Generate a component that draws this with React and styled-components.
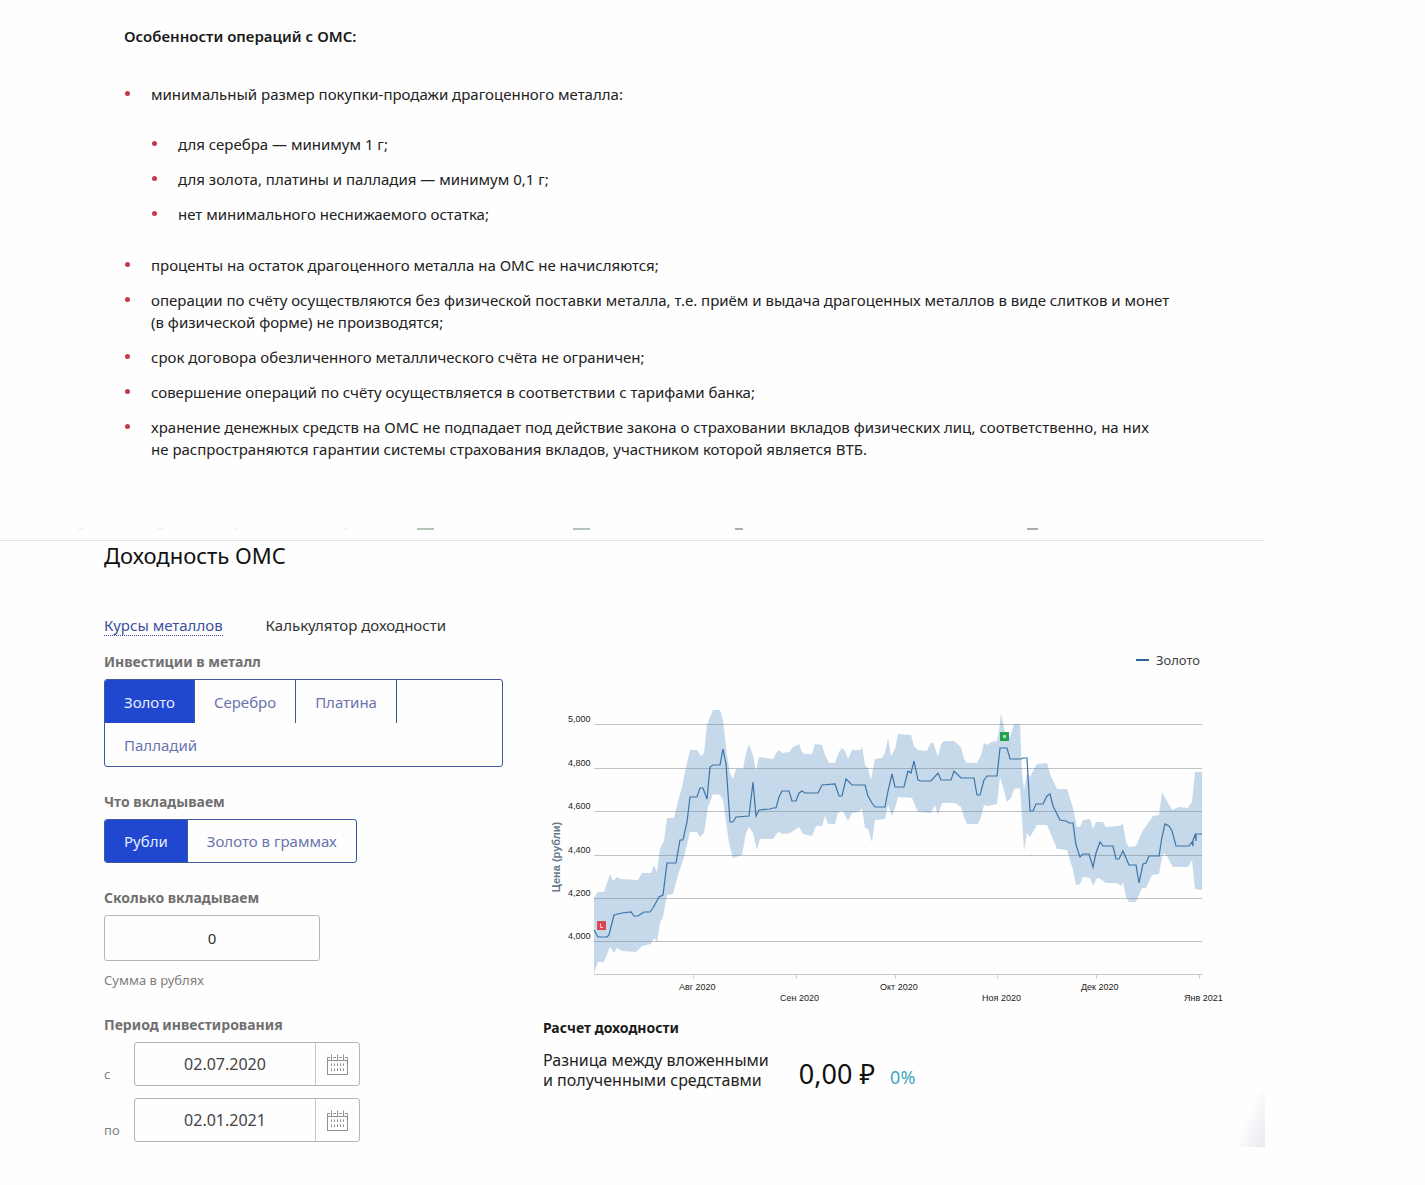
import React, { useState } from "react";
import styled, { createGlobalStyle, css } from "styled-components";

const GlobalStyle = createGlobalStyle`
  *, *::before, *::after { box-sizing: border-box; }
  body {
    margin: 0;
    background: #fefefe;
    color: #222;
    font-family: "Noto Sans", "Open Sans", sans-serif;
    font-size: 15px;
    line-height: 22px;
  }
  button, input { font: inherit; color: inherit; }
`;

const Page = styled.main`
  position: relative;
  max-width: 1265px;
`;

const Features = styled.section`
  padding: 25px 60px 68px 124px;
`;

const FeaturesTitle = styled.h2`
  margin: 0 0 36px;
  font-size: 15px;
  line-height: 22px;
  font-weight: 600;
  color: #1a1a1a;
`;

const BulletList = styled.ul`
  display: grid;
  gap: 13px;
  margin: ${(p) => (p.$nested ? "28px 0 16px" : "0")};
  padding: 0;
  list-style: none;
`;

const BulletItem = styled.li`
  display: grid;
  grid-template-columns: 27px minmax(0, 1045px);

  &::before {
    content: "";
    width: 5px;
    height: 5px;
    margin: 8px 0 0 1px;
    border-radius: 50%;
    background: #c43a4b;
  }
`;

const Remnants = styled.svg`
  display: block;
  width: 100%;
  height: 2px;
`;

const Yield = styled.section`
  margin-top: 10px;
  border-top: 1px solid #e2e2e2;
  padding: 0 25px 5px 104px;
`;

const YieldTitle = styled.h1`
  margin: 0 0 46px;
  font-size: 22px;
  line-height: 28px;
  font-weight: 400;
  color: #111;
`;

const Tabs = styled.nav`
  display: flex;
  gap: 43px;
  margin-bottom: 4px;
`;

const Tab = styled.a`
  line-height: 20px;
  text-decoration: none;
  color: ${(p) => (p.$link ? "#3c4f9f" : "#333")};
  border-bottom: 1px dotted ${(p) => (p.$link ? "#3c4f9f" : "transparent")};
`;

const Columns = styled.div`
  display: grid;
  grid-template-columns: 399px minmax(0, 1fr);
  gap: 37px;
`;

const Form = styled.form`
  display: flex;
  flex-direction: column;
  gap: 25px;
  padding-top: 12px;
`;

const Field = styled.fieldset`
  display: flex;
  flex-direction: column;
  align-items: flex-start;
  margin: 0;
  padding: 0;
  border: 0;
  min-width: 0;
`;

const labelStyle = css`
  display: block;
  margin: 0 0 7px;
  padding: 0;
  font-size: 14px;
  line-height: 20px;
  font-weight: 700;
  color: #707070;
`;

const Legend = styled.legend`${labelStyle}`;
const FieldLabel = styled.label`${labelStyle}`;

const Segments = styled.div`
  display: flex;
  flex-wrap: wrap;
  border: 1px solid #3f5a9c;
  border-radius: 3px;
  overflow: hidden;
`;

const Segment = styled.button`
  height: ${(p) => (p.$tall ? 43 : 42)}px;
  padding: 0 19px;
  border: 0;
  border-right: ${(p) => (p.$last ? "0" : "1px solid #3f5a9c")};
  background: ${(p) => (p.$active ? "#1f47d0" : "transparent")};
  color: ${(p) => (p.$active ? "#e6edff" : "#6b74ad")};
`;

const AmountInput = styled.input`
  width: 216px;
  height: 46px;
  border: 1px solid #b4b4b4;
  border-radius: 3px;
  background: #fefefe;
  text-align: center;
  color: #333;
`;

const Hint = styled.small`
  margin-top: 9px;
  font-size: 13px;
  line-height: 20px;
  color: #808080;
`;

const DateRows = styled.div`
  display: grid;
  gap: 12px;
`;

const DateRow = styled.div`
  display: grid;
  grid-template-columns: 30px 226px;
  align-items: end;
`;

const DateLabel = styled.label`
  font-size: 13px;
  line-height: 20px;
  padding-bottom: 2px;
  color: #808080;
`;

const DateBox = styled.div`
  display: flex;
  height: 44px;
  border: 1px solid #b4b4b4;
  border-radius: 3px;
`;

const DateInput = styled.input`
  flex: 1;
  min-width: 0;
  padding: 0;
  border: 0;
  background: transparent;
  text-align: center;
  font-size: 16px;
  color: #444;
`;

const CalendarButton = styled.button`
  display: grid;
  place-items: center;
  width: 44px;
  padding: 0;
  border: 0;
  border-left: 1px solid #c8c8c8;
  background: transparent;
`;

const ChartSvg = styled.svg`
  display: block;
  width: 100%;
  max-width: 700px;
  font-family: "Liberation Sans", sans-serif;
  font-size: 9px;
  fill: #222;
`;

const Result = styled.section`
  padding: 7px 0 0 3px;
`;

const ResultTitle = styled.h3`
  margin: 0 0 11px;
  font-size: 14px;
  line-height: 22px;
  font-weight: 700;
  color: #1a1a1a;
`;

const ResultRow = styled.div`
  display: flex;
  align-items: end;
  gap: 30px;
`;

const ResultText = styled.p`
  margin: 0;
  font-size: 16px;
  line-height: 20px;
`;

const Amounts = styled.div`
  display: flex;
  align-items: baseline;
  gap: 15px;
`;

const Total = styled.output`
  font-size: 27px;
  line-height: 32px;
  color: #111;
`;

const Percent = styled.span`
  font-size: 18px;
  color: #3fa6bd;
`;

const CornerShade = styled.div`
  position: absolute;
  right: 0;
  bottom: 0;
  width: 26px;
  height: 56px;
  background: linear-gradient(to top left, #e9eaf0, rgba(254, 254, 254, 0) 65%);
`;

const upper =
  "54,258 58,252 64,252 67,243 70,234 73,241 77,237 80,239 98,240 102,233 111,233 114,225 117,232 120,208 124,201 127,178 134,178 137,165 142,147 145,132 150,110 157,110 161,116 164,113 167,85 169,80 173,70 180,70 183,80 187,115 190,133 193,139 196,129 203,129 206,113 209,104 213,115 216,131 219,117 233,119 236,113 239,110 242,113 249,112 253,107 259,104 262,112 265,114 272,114 275,104 282,105 285,115 289,123 295,123 299,112 302,108 305,111 308,119 312,110 321,110 322,106 325,125 328,128 331,140 335,119 342,118 345,113 348,98 351,116 355,109 358,94 371,95 374,106 378,110 387,111 390,104 393,102 398,117 401,104 404,101 414,101 421,107 424,119 427,123 437,123 441,115 444,103 447,105 451,102 457,101 459,90 461,74 465,92 470,97 474,84 480,84 482,133 484,150 487,133 490,137 493,131 497,124 507,123 510,134 517,149 527,149 533,168 537,187 540,187 543,180 550,179 553,189 556,182 563,182 566,187 579,186 583,184 586,202 589,207 596,206 602,192 609,182 613,176 619,175 622,152 626,159 632,170 639,167 648,168 652,162 655,132 662,132";

const lower =
  "662,250 655,249 652,220 648,227 633,227 630,222 627,216 624,213 622,217 619,234 612,235 606,248 602,248 596,262 589,262 586,257 583,242 581,246 577,243 566,243 559,238 557,238 553,246 550,238 543,237 540,244 536,245 533,230 527,210 517,209 507,185 497,185 490,197 487,193 484,211 482,177 480,148 474,149 471,158 467,162 463,147 460,137 457,164 448,166 444,165 441,177 438,184 427,184 424,177 421,167 415,163 402,163 398,175 395,165 391,173 378,172 372,158 358,157 355,168 352,176 348,165 345,179 335,180 332,202 328,189 325,188 322,168 319,172 312,173 308,181 303,171 298,173 295,184 288,184 285,176 282,186 276,186 272,196 263,194 259,187 250,193 243,194 238,192 233,199 220,199 217,210 213,193 209,187 206,193 202,215 193,218 189,203 183,160 180,155 173,154 168,167 164,193 160,197 157,192 150,192 144,217 138,235 133,254 127,255 123,277 120,283 117,302 114,298 111,304 102,306 96,312 82,311 77,308 74,313 70,307 64,322 58,322 54,333";

const price =
  "54,290 58,297 67,297 69,295 74,275 82,273 91,272 94,276 98,276 104,272 110,272 113,268 119,257 123,255 127,223 136,223 140,200 143,200 147,182 150,157 157,157 160,148 163,148 167,159 170,127 173,125 180,125 183,109 186,124 190,182 193,182 196,177 209,176 213,142 216,176 219,170 230,169 233,168 236,168 239,157 242,151 249,151 252,161 256,161 259,153 262,151 265,153 278,153 282,145 295,144 299,156 302,156 306,139 312,145 325,145 328,156 332,163 335,167 345,167 348,151 352,134 355,147 364,147 368,131 371,133 374,121 378,140 381,141 391,141 398,133 401,140 411,140 414,131 421,138 434,138 437,155 440,155 444,140 447,136 457,136 460,108 467,108 470,119 481,119 483,118 487,118 490,171 493,171 496,164 503,164 507,156 510,154 513,166 520,180 526,181 529,183 533,183 536,205 540,217 543,214 549,214 553,227 556,213 560,202 563,206 573,206 576,219 579,219 583,211 589,225 596,225 599,243 603,224 606,223 609,216 619,216 622,197 625,184 629,186 632,191 636,206 649,206 652,202 653,206 653,200 655,195 656,201 656,194 662,194";

const priceTicks = [
  ["5,000", 84], ["4,800", 128], ["4,600", 171],
  ["4,400", 215], ["4,200", 258], ["4,000", 301],
];

const monthTicks = [
  ["Авг 2020", 153, 139, 350], ["Сен 2020", 256, 240, 361],
  ["Окт 2020", 355, 340, 350], ["Ноя 2020", 457, 442, 361],
  ["Дек 2020", 556, 541, 350], ["Янв 2021", 659, 644, 361],
];

function PriceChart() {
  return (
    <ChartSvg viewBox="0 0 700 370" role="img" aria-label="Цена золота в рублях">
      <path d="M596 20H609" stroke="#2f6596" strokeWidth="2" />
      <text x="616" y="25" fontFamily="Noto Sans, sans-serif" fontSize="13" fill="#444">Золото</text>
      <polygon points={`${upper} ${lower}`} fill="#c5d9ea" />
      {priceTicks.map(([label, y]) => (
        <g key={label}>
          <path d={`M54 ${y + 0.5}H662`} stroke="#6f7b85" strokeOpacity="0.45" />
          <text x="28" y={y - 2}>{label}</text>
        </g>
      ))}
      <path d="M54 334.5H662" stroke="#c4c4c4" />
      {monthTicks.map(([label, tick, x, y]) => (
        <g key={label}>
          <path d={`M${tick + 0.5} 335V339`} stroke="#d0d0d0" />
          <text x={x} y={y}>{label}</text>
        </g>
      ))}
      <polyline points={price} fill="none" stroke="#3d74a8" strokeWidth="1.2" />
      <rect x="57" y="281" width="9" height="9" fill="#dd4650" />
      <path d="M60.500 283.500V287.500H63" fill="none" stroke="#f6c9cc" />
      <rect x="460" y="92" width="9" height="9" fill="#22a04a" />
      <rect x="463" y="95" width="3" height="3" fill="#a8e0b4" />
      <text
        transform="translate(20 217) rotate(-90)"
        textAnchor="middle"
        fontSize="11"
        fontWeight="700"
        fill="#66788c"
      >
        Цена (рубли)
      </text>
    </ChartSvg>
  );
}

function CalendarIcon() {
  return (
    <svg width="23" height="23" viewBox="0 0 23 23" fill="none" stroke="#909090" aria-hidden="true">
      <rect x="1.500" y="7.500" width="20" height="14" />
      <path d="M1.500 8V4.500H4M7 4.500H10M13 4.500H16M19 4.500H21.500V8M5.500 1.500V7M11.500 1.500V7M17.500 1.500V7" />
      <path d="M5.500 10.500V13M8.500 10.500V13M11.500 10.500V13M14.500 10.500V13M17.500 10.500V13M5.500 15.500V18M8.500 15.500V18M11.500 15.500V18M14.500 15.500V18M17.500 15.500V18" />
    </svg>
  );
}

function SegmentedControl({ options, label }) {
  const [active, setActive] = useState(options[0]);
  return (
    <Segments role="group" aria-label={label}>
      {options.map((option, i) => (
        <Segment
          key={option}
          type="button"
          $tall={options.length > 2}
          $active={option === active}
          $last={i === options.length - 1}
          aria-pressed={option === active}
          onClick={() => setActive(option)}
        >
          {option}
        </Segment>
      ))}
    </Segments>
  );
}

function DateField({ id, label, value }) {
  return (
    <DateRow>
      <DateLabel htmlFor={id}>{label}</DateLabel>
      <DateBox>
        <DateInput id={id} defaultValue={value} />
        <CalendarButton type="button" aria-label="Календарь">
          <CalendarIcon />
        </CalendarButton>
      </DateBox>
    </DateRow>
  );
}

export default function App() {
  return (
    <>
      <GlobalStyle />
      <Page>
        <Features>
          <FeaturesTitle>Особенности операций с ОМС:</FeaturesTitle>
          <BulletList>
            <BulletItem>
              <div>
                минимальный размер покупки-продажи драгоценного металла:
                <BulletList $nested>
                  <BulletItem>для серебра — минимум 1 г;</BulletItem>
                  <BulletItem>для золота, платины и палладия — минимум 0,1 г;</BulletItem>
                  <BulletItem>нет минимального неснижаемого остатка;</BulletItem>
                </BulletList>
              </div>
            </BulletItem>
            <BulletItem>проценты на остаток драгоценного металла на ОМС не начисляются;</BulletItem>
            <BulletItem>
              операции по счёту осуществляются без физической поставки металла, т.е. приём и выдача
              драгоценных металлов в виде слитков и монет (в&nbsp;физической форме) не производятся;
            </BulletItem>
            <BulletItem>срок договора обезличенного металлического счёта не ограничен;</BulletItem>
            <BulletItem>совершение операций по счёту осуществляется в соответствии с тарифами банка;</BulletItem>
            <BulletItem>
              хранение денежных средств на ОМС не подпадает под действие закона о страховании вкладов
              физических лиц, соответственно, на них не&nbsp;распространяются гарантии системы страхования
              вкладов, участником которой является ВТБ.
            </BulletItem>
          </BulletList>
        </Features>
        <Remnants viewBox="0 0 1265 2" preserveAspectRatio="none" aria-hidden="true">
          <path d="M417 1H434M573 1H590" stroke="#b4c4b7" strokeWidth="2" />
          <path d="M735 1H743M1027 1H1038" stroke="#acacac" strokeWidth="2" />
          <path d="M78 1H84M157 1H164M233 1H238M343 1H348" stroke="#f5f5f5" strokeWidth="2" />
        </Remnants>
        <Yield>
          <YieldTitle>Доходность ОМС</YieldTitle>
          <Tabs>
            <Tab href="#rates" $link>Курсы металлов</Tab>
            <Tab href="#calculator">Калькулятор доходности</Tab>
          </Tabs>
          <Columns>
            <Form>
              <Field>
                <Legend>Инвестиции в металл</Legend>
                <SegmentedControl label="Металл" options={["Золото", "Серебро", "Платина", "Палладий"]} />
              </Field>
              <Field>
                <Legend>Что вкладываем</Legend>
                <SegmentedControl label="Валюта вклада" options={["Рубли", "Золото в граммах"]} />
              </Field>
              <Field>
                <FieldLabel htmlFor="amount">Сколько вкладываем</FieldLabel>
                <AmountInput id="amount" defaultValue="0" />
                <Hint>Сумма в рублях</Hint>
              </Field>
              <Field>
                <Legend>Период инвестирования</Legend>
                <DateRows>
                  <DateField id="date-from" label="с" value="02.07.2020" />
                  <DateField id="date-to" label="по" value="02.01.2021" />
                </DateRows>
              </Field>
            </Form>
            <div>
              <PriceChart />
              <Result>
                <ResultTitle>Расчет доходности</ResultTitle>
                <ResultRow>
                  <ResultText>
                    Разница между вложенными
                    <br />
                    и полученными средставми
                  </ResultText>
                  <Amounts>
                    <Total>0,00 ₽</Total>
                    <Percent>0%</Percent>
                  </Amounts>
                </ResultRow>
              </Result>
            </div>
          </Columns>
        </Yield>
        <CornerShade />
      </Page>
    </>
  );
}
